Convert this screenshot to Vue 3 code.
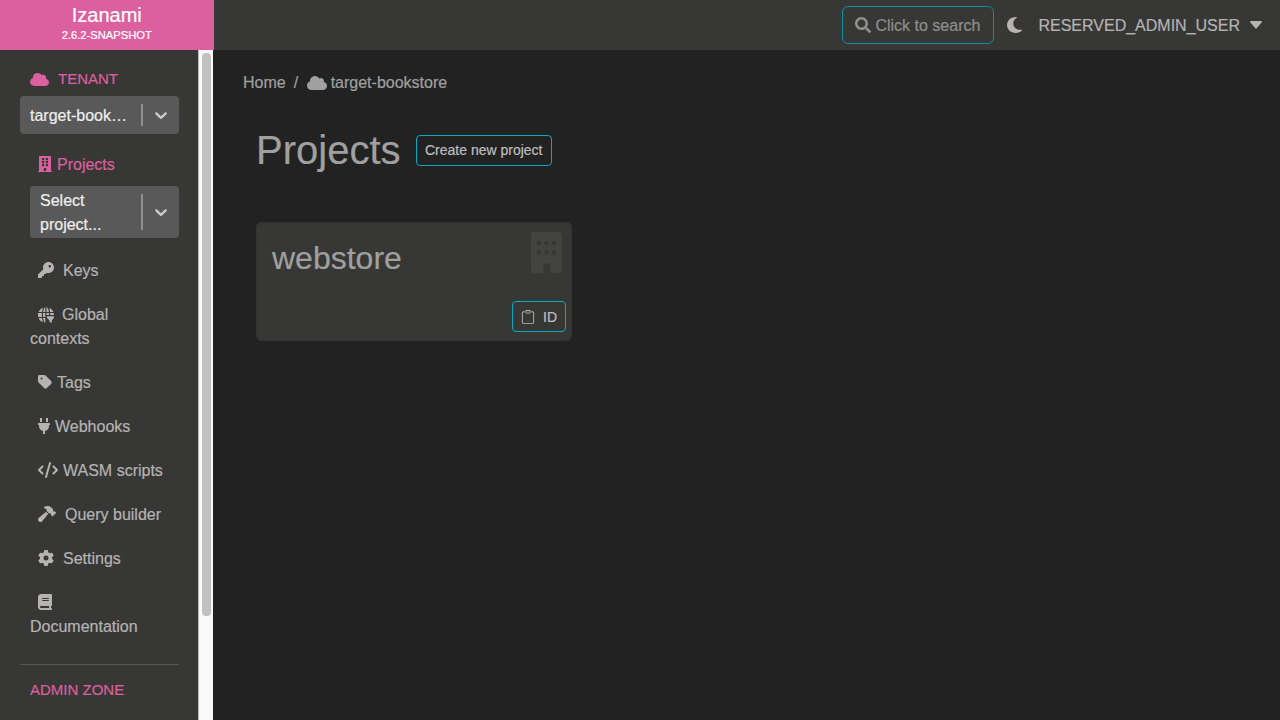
<script setup>
const building = 'M436 480h-20V24c0-13-11-24-24-24H56C43 0 32 11 32 24v456H12c-7 0-12 5-12 12v20h448v-20c0-7-5-12-12-12zM126 62h74v70h-74zM248 62h74v70h-74zM126 160h74v70h-74zM248 160h74v70h-74zM126 258h74v70h-74zM248 258h74v70h-74zM186 480v-84c0-7 5-12 12-12h52c7 0 12 5 12 12v84z'
const cloud = 'M537.6 226.6c4.1-10.7 6.4-22.4 6.4-34.6 0-53-43-96-96-96-19.7 0-38.1 6-53.3 16.2C367 64.2 315.3 32 256 32c-88.4 0-160 71.6-160 160 0 2.7.1 5.4.2 8.1C40.2 219.8 0 273.2 0 336c0 79.5 64.5 144 144 144h368c70.7 0 128-57.3 128-128 0-61.9-44-113.6-102.4-125.4z'
const chevron = 'M4.516 7.548c0.436-0.446 1.043-0.481 1.576 0l3.908 3.747 3.908-3.747c0.533-0.481 1.141-0.446 1.574 0 0.436 0.445 0.408 1.197 0 1.615-0.406 0.418-4.695 4.502-4.695 4.502-0.217 0.223-0.502 0.335-0.787 0.335s-0.57-0.112-0.789-0.335c0 0-4.287-4.084-4.695-4.502s-0.436-1.17 0-1.615z'

const items = [
  { id: 'keys', label: 'Keys', vb: '0 0 512 512', d: 'M336 352c97.2 0 176-78.8 176-176S433.2 0 336 0S160 78.8 160 176c0 18.7 2.9 36.800 8.300 53.700L7 391c-4.500 4.500-7 10.600-7 17v80c0 13.300 10.700 24 24 24h80c13.300 0 24-10.700 24-24V448h40c13.300 0 24-10.700 24-24V384h40c6.400 0 12.500-2.500 17-7l33.300-33.300c16.900 5.400 35 8.300 53.700 8.300zM376 96a40 40 0 1 1 0 80 40 40 0 1 1 0-80z' },
  { id: 'contexts', label: 'Global contexts', vb: '0 0 16 16', d: '' },
  { id: 'tags', label: 'Tags', vb: '0 0 448 512', d: 'M0 80V229.5c0 17 6.7 33.3 18.7 45.3l176 176c25 25 65.5 25 90.5 0L418.7 317.3c25-25 25-65.5 0-90.5l-176-176c-12-12-28.3-18.7-45.3-18.7H48C21.5 32 0 53.5 0 80zm112 32a32 32 0 1 1 0 64 32 32 0 1 1 0-64z' },
  { id: 'webhooks', label: 'Webhooks', vb: '0 0 384 512', d: 'M320 0h-64v128h64Zm48 160H16A16 16 0 0 0 0 176v32a16 16 0 0 0 16 16H32v32A160 160 0 0 0 160 412.8V512h64V412.8A160 160 0 0 0 352 256V224h16a16 16 0 0 0 16-16V176A16 16 0 0 0 368 160ZM128 0H64v128h64Z' },
  { id: 'wasm', label: 'WASM scripts', vb: '0 0 640 512', d: 'M392.8 1.2c-17-4.9-34.7 5-39.6 22l-128 448c-4.9 17 5 34.7 22 39.6s34.7-5 39.6-22l128-448c4.9-17-5-34.7-22-39.6zm80.6 120.1c-12.5 12.5-12.5 32.8 0 45.3L562.7 256l-89.4 89.4c-12.5 12.5-12.5 32.8 0 45.3s32.8 12.5 45.3 0l112-112c12.5-12.5 12.5-32.8 0-45.3l-112-112c-12.5-12.5-32.8-12.5-45.3 0zm-306.7 0c-12.5-12.5-32.8-12.5-45.3 0l-112 112c-12.5 12.5-12.5 32.8 0 45.3l112 112c12.5 12.5 32.8 12.5 45.3 0s12.5-32.8 0-45.3L77.3 256l89.4-89.4c12.5-12.5 12.5-32.8 0-45.3z' },
  { id: 'query', label: 'Query builder', vb: '0 0 576 512', d: 'M413.5 237.5c-28.2 4.8-58.2-3.6-80-25.4l-38.1-38.1C280.4 159 272 138.8 272 117.6V105.5L192.3 62c-5.3-2.9-8.6-8.6-8.3-14.7s3.9-11.5 9.5-14l47.2-21C259.1 4.2 279 0 299.2 0h18.1c36.7 0 72 14 98.7 39.1l44.6 42c24.2 22.8 33.2 55.7 26.6 86L503 183l8-8c9.4-9.4 24.6-9.4 33.9 0l24 24c9.4 9.4 9.4 24.6 0 33.9l-88 88c-9.4 9.4-24.6 9.4-33.9 0l-24-24c-9.4-9.4-9.4-24.6 0-33.9l8-8-17.5-17.5zM27.4 377.1L260.9 182.6c3.5 4.9 7.5 9.6 11.8 14l38.1 38.1c6 6 12.4 11.2 19.2 15.7L134.9 484.6c-14.5 17.4-36 27.4-58.6 27.4C34.1 512 0 477.8 0 435.7c0-22.6 10.1-44.1 27.4-58.6z' },
  { id: 'settings', label: 'Settings', vb: '0 0 512 512', d: 'M495.9 166.6c3.2 8.7 .5 18.4-6.4 24.6l-43.3 39.4c1.1 8.3 1.7 16.8 1.7 25.4s-.6 17.1-1.7 25.4l43.3 39.4c6.9 6.2 9.6 15.9 6.4 24.6c-4.4 11.9-9.7 23.3-15.8 34.3l-4.7 8.1c-6.6 11-14 21.4-22.1 31.2c-5.9 7.2-15.7 9.6-24.5 6.8l-55.7-17.7c-13.4 10.3-28.2 18.9-44 25.4l-12.5 57.1c-2 9.1-9 16.3-18.2 17.8c-13.8 2.3-28 3.5-42.5 3.5s-28.7-1.2-42.5-3.5c-9.2-1.5-16.2-8.7-18.2-17.8l-12.5-57.1c-15.8-6.5-30.6-15.1-44-25.4L83.1 425.9c-8.8 2.8-18.6 .3-24.5-6.8c-8.1-9.8-15.5-20.2-22.1-31.2l-4.7-8.1c-6.1-11-11.4-22.4-15.8-34.3c-3.2-8.7-.5-18.4 6.4-24.6l43.3-39.4C64.6 273.1 64 264.6 64 256s.6-17.1 1.7-25.4L22.4 191.2c-6.9-6.2-9.6-15.9-6.4-24.6c4.4-11.9 9.7-23.3 15.8-34.3l4.7-8.1c6.6-11 14-21.4 22.1-31.2c5.9-7.2 15.7-9.6 24.5-6.8l55.7 17.7c13.4-10.3 28.2-18.9 44-25.4l12.5-57.1c2-9.1 9-16.3 18.2-17.8C227.3 1.2 241.5 0 256 0s28.7 1.2 42.5 3.5c9.2 1.5 16.2 8.7 18.2 17.8l12.5 57.1c15.8 6.5 30.6 15.1 44 25.4l55.7-17.7c8.8-2.8 18.6-.3 24.5 6.8c8.1 9.8 15.5 20.2 22.1 31.2l4.7 8.1c6.1 11 11.4 22.4 15.8 34.3zM256 336a80 80 0 1 0 0-160 80 80 0 1 0 0 160z' },
  { id: 'docs', label: 'Documentation', vb: '0 0 448 512', d: 'M96 0C43 0 0 43 0 96V416c0 53 43 96 96 96H384h32c17.7 0 32-14.3 32-32s-14.3-32-32-32V384c17.7 0 32-14.3 32-32V32c0-17.7-14.3-32-32-32H384 96zm0 384H352v64H96c-17.7 0-32-14.3-32-32s14.3-32 32-32zm32-240c0-8.8 7.2-16 16-16H336c8.8 0 16 7.2 16 16s-7.2 16-16 16H144c-8.8 0-16-7.2-16-16zm16 48H336c8.8 0 16 7.2 16 16s-7.2 16-16 16H144c-8.8 0-16-7.2-16-16s7.2-16 16-16z' },
]
</script>

<template>
  <div class="app">
    <header class="topbar">
      <div class="brand">
        <div class="brand-name">Izanami</div>
        <div class="brand-version">2.6.2-SNAPSHOT</div>
      </div>
      <div class="top-actions">
        <button class="search">
          <svg width="16" height="16" viewBox="0 0 512 512"><path d="M505 442.7L405.3 343c-4.5-4.5-10.6-7-17-7H372c27.6-35.3 44-79.7 44-128C416 93.1 322.9 0 208 0S0 93.1 0 208s93.1 208 208 208c48.3 0 92.7-16.4 128-44v16.3c0 6.4 2.5 12.5 7 17l99.7 99.7c9.4 9.4 24.6 9.4 33.9 0l28.3-28.3c9.4-9.4 9.4-24.6.1-34zM208 336c-70.7 0-128-57.2-128-128 0-70.7 57.2-128 128-128 70.7 0 128 57.2 128 128 0 70.7-57.2 128-128 128z" /></svg>
          <span class="drop">Click to search</span>
        </button>
        <svg class="moon" width="15" height="16" viewBox="0 32 388 448" preserveAspectRatio="none"><path d="M223.5 32C100 32 0 132.3 0 256S100 480 223.5 480c60.6 0 115.5-24.2 155.8-63.4c5-4.9 6.3-12.5 3.1-18.7s-10.1-9.7-17-8.5c-9.8 1.7-19.8 2.6-30.1 2.6c-96.9 0-175.5-78.8-175.5-176c0-65.8 36-123.1 89.3-153.3c6.1-3.5 9.2-10.5 7.7-17.3s-7.3-11.9-14.3-12.5c-6.3-.5-12.6-.8-19-.8z" /></svg>
        <span class="user drop">RESERVED_ADMIN_USER</span>
        <svg class="caret" width="12" height="8" viewBox="0 0 12 8"><path d="M.8 0h10.4c.8 0 1 .8.6 1.3L6.7 7.2c-.4.4-1 .4-1.4 0L.2 1.3C-.2.8 0 0 .8 0z" /></svg>
      </div>
    </header>

    <div class="body">
      <nav class="sidebar">
        <div class="tenant-head">
          <svg width="19" height="13" viewBox="0 32 640 448" preserveAspectRatio="none"><path :d="cloud" /></svg>
          <span>TENANT</span>
        </div>
        <div class="select">
          <div class="select-value">target-book…</div>
          <div class="select-sep"></div>
          <svg class="chev" width="20" height="20" viewBox="0 0 20 20"><path :d="chevron" /></svg>
        </div>
        <div class="section">
          <a class="link active">
            <svg class="i-projects" viewBox="0 0 448 512"><path fill-rule="evenodd" :d="building" /></svg><span>Projects</span>
          </a>
          <div class="select tall">
            <div class="select-value">Select project...</div>
            <div class="select-sep"></div>
            <svg class="chev" width="20" height="20" viewBox="0 0 20 20"><path :d="chevron" /></svg>
          </div>
          <a v-for="it in items" :key="it.id" class="link">
            <svg :class="'i-' + it.id" :viewBox="it.vb">
              <path v-if="it.d" fill-rule="evenodd" :d="it.d" />
              <g v-else>
                <path d="M4.900.700C2.900 1.500 1.300 3 .600 5h3.500c.100-1.700.400-3.200.800-4.300zM7.300 0C6.200.600 5.400 2.500 5.100 5h2.200zM8.500 0v5h2.400C10.600 2.500 9.700.600 8.500 0zM11.200.800c.400 1.100.700 2.600.800 4.200h3.400c-.700-1.900-2.200-3.400-4.200-4.200zM.200 6.100c-.300 1.300-.300 2.500 0 3.800h3.700V6.100zM5 6.100v3.800h2.300V6.100zM8.500 6.100v1.900h2.500v-1.900zM12.100 6.100v1.900h3.800c0-.700 0-1.300-.200-1.900zM.600 11c.700 2 2.300 3.500 4.300 4.300-.400-1.100-.700-2.600-.800-4.300zM5.100 11c.300 2.500 1.100 4.400 2.200 5v-5z" />
                <path d="M8.800 9.200H16v1.600l-2.200 2.600V16l-2.400-1.300v-1.500L8.800 10.800z" />
              </g>
            </svg><span>{{ it.label }}</span>
          </a>
        </div>
        <hr class="rule" />
        <div class="admin">ADMIN ZONE</div>
      </nav>
      <div class="scrollbar"><div class="thumb"></div></div>

      <main class="main">
        <div class="crumbs">
          <span>Home</span><span class="slash">/</span>
          <svg width="20" height="14" viewBox="0 32 640 448"><path :d="cloud" /></svg>
          <span>target-bookstore</span>
        </div>
        <div class="title-row">
          <h1>Projects</h1>
          <button class="btn">Create new project</button>
        </div>
        <section class="card">
          <h2>webstore</h2>
          <svg class="card-icon" width="31" height="41" viewBox="0 0 31 41"><path fill-rule="evenodd" d="M3 0h25a3 3 0 0 1 3 3v35a3 3 0 0 1-3 3h-8.500v-6.500a3.500 3.500 0 0 0-7 0V41H3a3 3 0 0 1-3-3V3a3 3 0 0 1 3-3zM7 9h2q1 0 1 1v2q0 1-1 1H7q-1 0-1-1v-2q0-1 1-1zM14.500 9h2q1 0 1 1v2q0 1-1 1h-2q-1 0-1-1v-2q0-1 1-1zM22 9h2q1 0 1 1v2q0 1-1 1h-2q-1 0-1-1v-2q0-1 1-1zM7 18.500h2q1 0 1 1v2q0 1-1 1H7q-1 0-1-1v-2q0-1 1-1zM14.500 18.500h2q1 0 1 1v2q0 1-1 1h-2q-1 0-1-1v-2q0-1 1-1zM22 18.500h2q1 0 1 1v2q0 1-1 1h-2q-1 0-1-1v-2q0-1 1-1z" /></svg>
          <button class="btn id-btn">
            <svg width="14" height="14" viewBox="0 0 16 16"><path d="M4 1.500H3a2 2 0 0 0-2 2V14a2 2 0 0 0 2 2h10a2 2 0 0 0 2-2V3.500a2 2 0 0 0-2-2h-1v1h1a1 1 0 0 1 1 1V14a1 1 0 0 1-1 1H3a1 1 0 0 1-1-1V3.500a1 1 0 0 1 1-1h1v-1z" /><path fill-rule="evenodd" d="M9.500 1a.5.5 0 0 1 .5.5v1a.5.5 0 0 1-.5.5h-3a.5.5 0 0 1-.5-.5v-1a.5.5 0 0 1 .5-.5h3zM6.500 0A1.500 1.500 0 0 0 5 1.500v1A1.500 1.500 0 0 0 6.500 4h3A1.500 1.500 0 0 0 11 2.500v-1A1.500 1.500 0 0 0 9.500 0h-3z" /></svg>
            <span class="drop">ID</span>
          </button>
        </section>
      </main>
    </div>
  </div>
</template>

<style>
html, body { margin: 0; overflow: hidden; background: #222; }
</style>

<style scoped>
* { box-sizing: border-box; }
svg { fill: currentColor; flex: none; }
.app { width: 1280px; height: 720px; display: flex; flex-direction: column; overflow: hidden; background: #222; color: #b5b3b3; font: 16px/24px "Liberation Sans", Arial, sans-serif; -webkit-text-stroke: 0.2px; }
.drop { padding-top: 2px; }
.topbar { height: 50px; flex: none; display: flex; justify-content: space-between; background: #373735; }
.brand { width: 213.500px; background: #dc5f9f; color: #fff; text-align: center; padding-top: 3px; }
.brand-name { font-size: 20px; line-height: 24px; }
.brand-version { font-size: 11.200px; line-height: 16px; }
.top-actions { display: flex; align-items: center; padding-right: 18px; }
.top-actions > .drop, .search .drop, .id-btn .drop { display: block; }
.search { width: 152px; height: 38px; display: flex; align-items: center; gap: 4px; padding: 0 0 0 12px; border: 1px solid #0b8fa2; border-radius: 6px; background: transparent; color: #8f8f8e; font: inherit; white-space: nowrap; }
.moon { margin-left: 13px; }
.user { margin-left: 16px; }
.caret { margin-left: 10px; }
.body { flex: 1; display: flex; min-height: 0; }
.sidebar { width: 198px; flex: none; padding: 16px 19.500px 0 20px; background: #373735; overflow: hidden; }
.tenant-head { height: 26px; display: flex; align-items: center; gap: 9px; padding-left: 10px; color: #dc5f9f; font-size: 15px; }
.select { height: 38px; margin-top: 4px; display: flex; align-items: center; border-radius: 4px; background: #595959; color: #eee; }
.select-value { flex: 1; padding: 2px 0 0 10px; white-space: nowrap; }
.select-sep { width: 1.500px; align-self: stretch; margin: 8px 0; background: #929292; }
.chev { margin: 0 8px 0 8px; color: #ccc; }
.section { margin-left: 10px; padding-top: 8px; }
.tall { height: 52px; margin: 0 0 10px; }
.tall .select-value { white-space: normal; line-height: 24px; }
.link { display: block; padding: 11px 12px 9px 0; }
.link svg { height: 16px; vertical-align: -2px; margin-left: 8px; }
.active { color: #dc5f9f; }
.i-projects { width: 14px; margin-right: 5px; }
.i-keys { width: 16px; margin-right: 9px; }
.i-contexts { width: 16px; margin-right: 8px; position: relative; top: 1px; }
.i-tags { width: 14px; margin-right: 5px; }
.i-webhooks { width: 12px; margin-right: 5px; }
.i-wasm { width: 20px; margin-right: 5px; }
.i-query { width: 18px; margin-right: 9px; }
.i-settings { width: 16px; margin-right: 9px; }
.i-docs { width: 14px; margin-right: 60px; }
.link:last-child { padding-right: 0; }
.rule { height: 1px; margin: 16px 0 0; border: 0; background: #555553; }
.admin { margin: 13px 0 0 10px; color: #dc5f9f; font-size: 15px; }
.scrollbar { width: 15px; flex: none; padding: 3px 2px 0 3px; background: #fafafa; border-left: 1px solid #b8b8b8; }
.thumb { width: 9px; height: 563px; border-radius: 4px; background: #c1c1c1; }
.main { padding: 20px 30px; color: #a0a0a0; }
.crumbs { display: flex; align-items: center; padding-top: 1px; }
.slash { margin: 0 8px; }
.crumbs svg { margin: -1px 4px 0 .5px; }
.title-row { display: flex; align-items: center; margin: 31px 0 0 13px; height: 48px; }
h1 { margin: 0 15.500px 0 0; font-size: 40px; line-height: 48px; font-weight: 400; }
.btn { height: 31px; padding: 0 8px; border: 1px solid #06a9be; border-radius: 4px; background: transparent; color: #bfbfbf; font: 14px/21px "Liberation Sans", Arial, sans-serif; white-space: nowrap; }
.card { position: relative; width: 316px; height: 119px; margin: 48px 0 0 13px; padding: 16px 15px; border: 1px solid #333331; border-radius: 5px; background: #373735; }
h2 { margin: 0; font-size: 32px; line-height: 38px; font-weight: 400; }
.card-icon { position: absolute; right: 9px; top: 9px; color: #434341; }
.id-btn { position: absolute; right: 5px; bottom: 8px; width: 54px; display: flex; align-items: center; gap: 8px; }
</style>
